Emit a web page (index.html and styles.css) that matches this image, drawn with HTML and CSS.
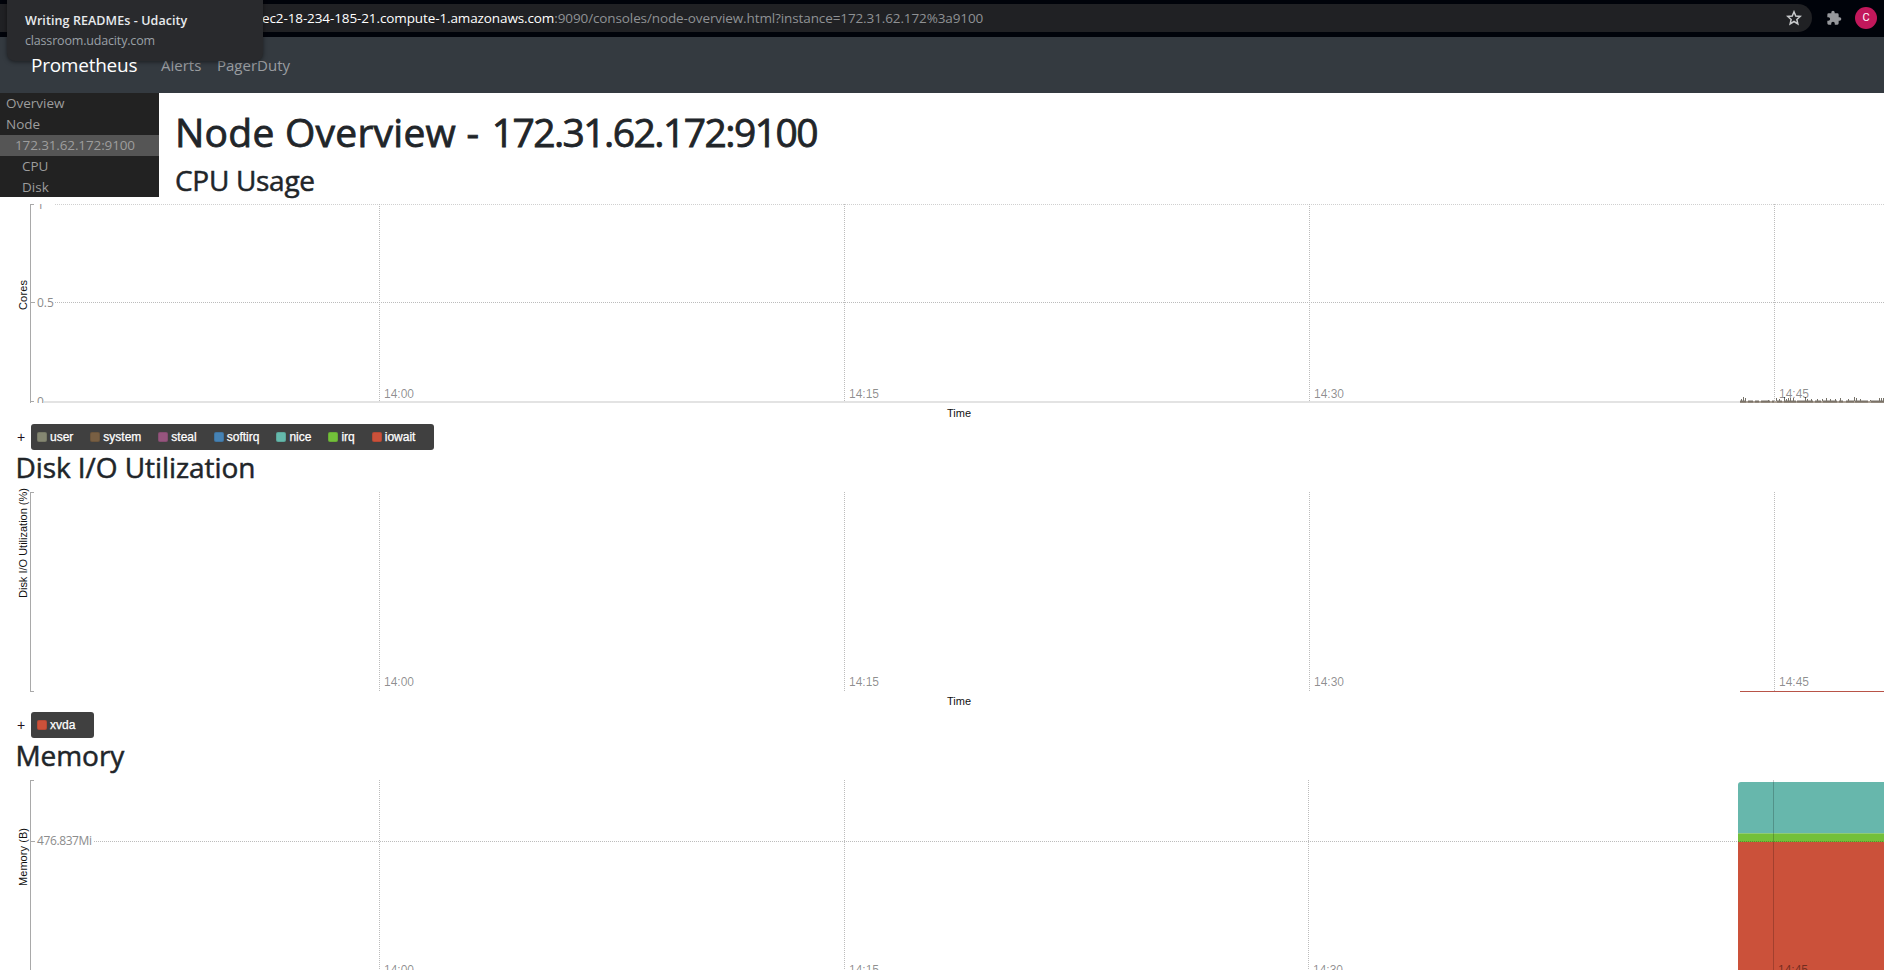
FILE: index.html
```
<!DOCTYPE html>
<html lang="en">
<head>
<meta charset="utf-8">
<title>Node Overview</title>
<link rel="stylesheet" href="styles.css">
</head>
<body>
<div class="browser-bar">
  <div class="omnibox">
    <span class="url"><span class="host">ec2-18-234-185-21.compute-1.amazonaws.com</span><span class="path">:9090/consoles/node-overview.html?instance=172.31.62.172%3a9100</span></span>
    <svg class="star" width="16" height="16" viewBox="0 0 16 16"><path d="M8 1.8l1.75 4.2 4.5.4-3.4 3 1 4.5L8 11.5l-3.85 2.4 1-4.5-3.4-3 4.5-.4z" fill="none" stroke="#c8cacc" stroke-width="1.5"/></svg>
  </div>
  <svg class="puzzle" width="16" height="16" viewBox="0 0 24 24"><path fill="#96989c" d="M20.5 11H19V7a2 2 0 0 0-2-2h-4V3.500a2.500 2.500 0 0 0-5 0V5H4a2 2 0 0 0-2 2v3.800h1.500a2.700 2.700 0 0 1 0 5.400H2V20a2 2 0 0 0 2 2h3.800v-1.500a2.700 2.700 0 0 1 5.400 0V22H17a2 2 0 0 0 2-2v-4h1.500a2.500 2.500 0 0 0 0-5z"/></svg>
  <div class="avatar">C</div>
</div>
<div class="tab-card">
  <div class="tab-title">Writing READMEs - Udacity</div>
  <div class="tab-host">classroom.udacity.com</div>
</div>
<nav class="navbar">
  <a class="brand">Prometheus</a>
  <a class="nav-link alerts">Alerts</a>
  <a class="nav-link duty">PagerDuty</a>
</nav>
<div class="top">
  <aside class="sidebar">
    <a class="side-item">Overview</a>
    <a class="side-item">Node</a>
    <a class="side-item level1 active">172.31.62.172:9100</a>
    <a class="side-item level2">CPU</a>
    <a class="side-item level2">Disk</a>
  </aside>
  <header class="headings">
    <h1>Node Overview - <span class="instance">172.31.62.172:9100</span></h1>
    <h3 class="h-cpu">CPU Usage</h3>
  </header>
</div>

<section class="panel">
  <svg class="chart" width="1884" height="220" viewBox="0 0 1884 220">
    <clipPath id="plot"><rect x="0" y="0" width="1884" height="199"/></clipPath>
    <g class="grid">
      <path d="M55 .5H1884" class="faint"/>
      <path d="M55 98.500H1884M379.500 0V200M844.500 0V200M1309.500 0V200M1774.500 0V200"/>
    </g>
    <path d="M44 198H1740" stroke="#e3e3e3" stroke-width="2"/>
    <path d="M1740 198H1884" stroke="#aaa095" stroke-width="2"/>
    <path d="M1740 197.500h6m2 0h5m2 0h4m2 0h9m2 0h2m3 0h5m2 0h12m1 0h16m2 0h6m2 0h14m2 0h4m3 0h8m1 0h13m3 0h18" stroke="#7a7268" stroke-width="2"/>
    <path d="M1741.500 197v-2m2 2v-4m2 4v-3m23 3v-1m8 1v-3m3 3v-2m5 2v-4m2 4v-2m2 2v-3m2 3v-3m3 3v-3m12 3v-4m2 4v-2m4 2v-2m6 2v-2m5 2v-2m4 2v-3m4 3v-2m5 2v-2m5 2v-3m8 3v-2m6 2v-4m2 4v-3m4 3v-2m10 2v-1m9 1v-3m2 3v-3m2 3v-3m2 3v-2m3 2v-1" stroke="#77736a"/>
    <path d="M30.500 0V199M30 .5h4M30 98.500h5M30 197.500h4" class="axis"/>
    <g class="ylab" clip-path="url(#plot)"><text x="37" y="5">1</text><text x="37" y="103">0.5</text><text x="37" y="202">0</text></g>
    <g class="xlab"><text x="384" y="193.500">14:00</text><text x="849" y="193.500">14:15</text><text x="1314" y="193.500">14:30</text><text x="1779" y="193.500">14:45</text></g>
    <text class="name" transform="translate(27 106) rotate(-90)" textLength="30">Cores</text>
    <text class="name" x="947" y="213" textLength="24">Time</text>
  </svg>
  <div class="legend-row"><span class="plus">+</span>
    <ul class="legend">
      <li><i class="sw c-user"></i>user</li><li><i class="sw c-system"></i>system</li><li><i class="sw c-steal"></i>steal</li><li><i class="sw c-softirq"></i>softirq</li><li><i class="sw c-nice"></i>nice</li><li><i class="sw c-irq"></i>irq</li><li><i class="sw c-red"></i>iowait</li>
    </ul>
  </div>
</section>

<h3 class="h-disk">Disk I/O Utilization</h3>
<section class="panel">
  <svg class="chart" width="1884" height="220" viewBox="0 0 1884 220">
    <g class="grid"><path d="M379.500 0V200M844.500 0V200M1309.500 0V200M1774.500 0V200"/></g>
    <path d="M1740 199.500H1884" stroke="#b85348" stroke-width="1.200"/>
    <path d="M30.500 0V199M30 .5h4M30 199.500h4" class="axis"/>
    <g class="xlab"><text x="384" y="193.500">14:00</text><text x="849" y="193.500">14:15</text><text x="1314" y="193.500">14:30</text><text x="1779" y="193.500">14:45</text></g>
    <text class="name" transform="translate(27 106) rotate(-90)" textLength="110">Disk I/O Utilization (%)</text>
    <text class="name" x="947" y="213" textLength="24">Time</text>
  </svg>
  <div class="legend-row"><span class="plus">+</span>
    <ul class="legend"><li><i class="sw c-red"></i>xvda</li></ul>
  </div>
</section>

<h3 class="h-memory">Memory</h3>
<section class="panel">
  <svg class="chart" width="1884" height="190" viewBox="0 0 1884 190">
    <path d="M1738 54V5q0-3 3-3H1884V54z" fill="#67b7ac"/>
    <path d="M1738 53h146v9H1738z" fill="#73c03a"/>
    <path d="M1738 53.500h146" stroke="#8fcb76"/>
    <path d="M1738 62h146v128H1738z" fill="#cb513a"/>
    <g class="grid"><path d="M94 61.500H1738M379.500 0V190M844.500 0V190M1308.500 0V190"/></g>
    <path d="M1738 61.500H1884" stroke="#000" stroke-opacity=".25" stroke-dasharray="1 1"/>
    <path d="M1773.500 0V190" stroke="#000" stroke-opacity=".2"/>
    <path d="M30.500 0V190M30 .5h4M30 61.500h5" class="axis"/>
    <g class="ylab"><text x="37" y="65" textLength="55">476.837Mi</text></g>
    <g class="xlab"><text x="384" y="194">14:00</text><text x="849" y="194">14:15</text><text x="1313" y="194">14:30</text><text x="1778" y="194">14:45</text></g>
    <text class="name" transform="translate(27 106) rotate(-90)" textLength="58">Memory (B)</text>
  </svg>
</section>
</body>
</html>
```
FILE: styles.css
```
* { box-sizing: border-box; }
body { margin: 0; width: 1884px; height: 970px; overflow: hidden; background: #fff; color: #212529; font-family: "Open Sans", "Noto Sans", sans-serif; }
.browser-bar { display: flex; align-items: center; height: 37px; padding-bottom: 1px; background: #00030a; }
.omnibox { display: flex; align-items: center; width: 1812px; height: 28px; padding: 0 10px 0 262px; border-radius: 0 14px 14px 0; background: #202124; }
.url { flex: 1; padding-bottom: 1px; font-size: 13.500px; line-height: 26px; white-space: nowrap; color: #8f9194; letter-spacing: -.11px; }
.host { color: #fff; }
.puzzle { margin-left: 14px; }
.avatar { width: 22px; height: 22px; margin-left: 13px; border-radius: 50%; background: #c2185b; color: #fff; font: 11px/22px Roboto, sans-serif; text-align: center; }
.tab-card { position: absolute; left: 7px; top: -8px; width: 256px; height: 69px; padding: 19px 18px; border-radius: 8px; background: #292a2d; box-shadow: 0 1px 4px rgba(0,0,0,.5); white-space: nowrap; }
.tab-title { font-size: 12.500px; line-height: 20px; font-weight: 600; color: #e8eaed; letter-spacing: .08px; }
.tab-host { font-size: 12.500px; line-height: 20px; color: #9aa0a6; letter-spacing: -.17px; }
.navbar { display: flex; align-items: center; height: 56px; padding-left: 31px; background: #343a40; color: #9a9da0; font-size: 15px; }
.brand { position: relative; z-index: 1; width: 130px; color: #fff; font-size: 19px; letter-spacing: -.25px; }
.alerts { width: 56px; }
.top { display: flex; height: 111px; }
.sidebar { width: 159px; height: 104px; background: #222; color: #9d9d9d; font-size: 13.500px; }
.side-item { display: block; height: 21px; padding-left: 6px; line-height: 20px; white-space: nowrap; }
.side-item:last-child { height: 20px; }
.level1 { padding-left: 15px; letter-spacing: -.13px; }
.level2 { padding-left: 22px; }
.active { background: #555; }
.headings { padding-left: 16px; }
h1, h3 { margin: 0; font-weight: 500; white-space: nowrap; -webkit-text-stroke: .5px #212529; }
h1 { padding-top: 15px; font-size: 39px; line-height: 48px; letter-spacing: .25px; -webkit-text-stroke-width: .8px; }
.instance { margin-left: 2px; letter-spacing: -1.55px; }
h3 { font-size: 28px; line-height: 34px; letter-spacing: -.3px; }
.h-cpu { margin-top: 7px; }
.h-disk, .h-memory { height: 42px; padding-left: 15.500px; letter-spacing: -.07px; }
.chart { display: block; overflow: visible; }
.grid path { fill: none; stroke: #bcbcbc; stroke-dasharray: 1 1; }
.grid .faint { stroke: #d0d0d0; }
.axis { fill: none; stroke: #a9a9a9; }
.ylab { font: 12px "Open Sans", sans-serif; fill: #8c8c8c; }
.xlab { font: 12px "Liberation Sans", Arial, sans-serif; fill: #000; fill-opacity: .45; }
.name { font: 11px "Liberation Sans", Arial, sans-serif; fill: #111; }
.legend-row { display: flex; align-items: center; height: 26px; font: 12px "Liberation Sans", Arial, sans-serif; }
.plus { width: 31px; padding-left: 17px; font-size: 14px; color: #201020; }
.legend { display: flex; align-items: center; height: 26px; margin: 0; padding: 0 2px 1px 6px; border-radius: 3px; background: #404040; color: #fff; list-style: none; }
.legend li { display: flex; align-items: center; padding-right: 17px; -webkit-text-stroke: .25px #fff; }
.sw { width: 10px; height: 10px; margin-right: 3px; border: 1px solid rgba(0,0,0,.1); border-radius: 2px; }
.c-user { background: #858772; }
.c-system { background: #785f43; }
.c-steal { background: #96557e; }
.c-softirq { background: #4682b4; }
.c-nice { background: #65b9ac; }
.c-irq { background: #73c03a; }
.c-red { background: #cb513a; }
```
